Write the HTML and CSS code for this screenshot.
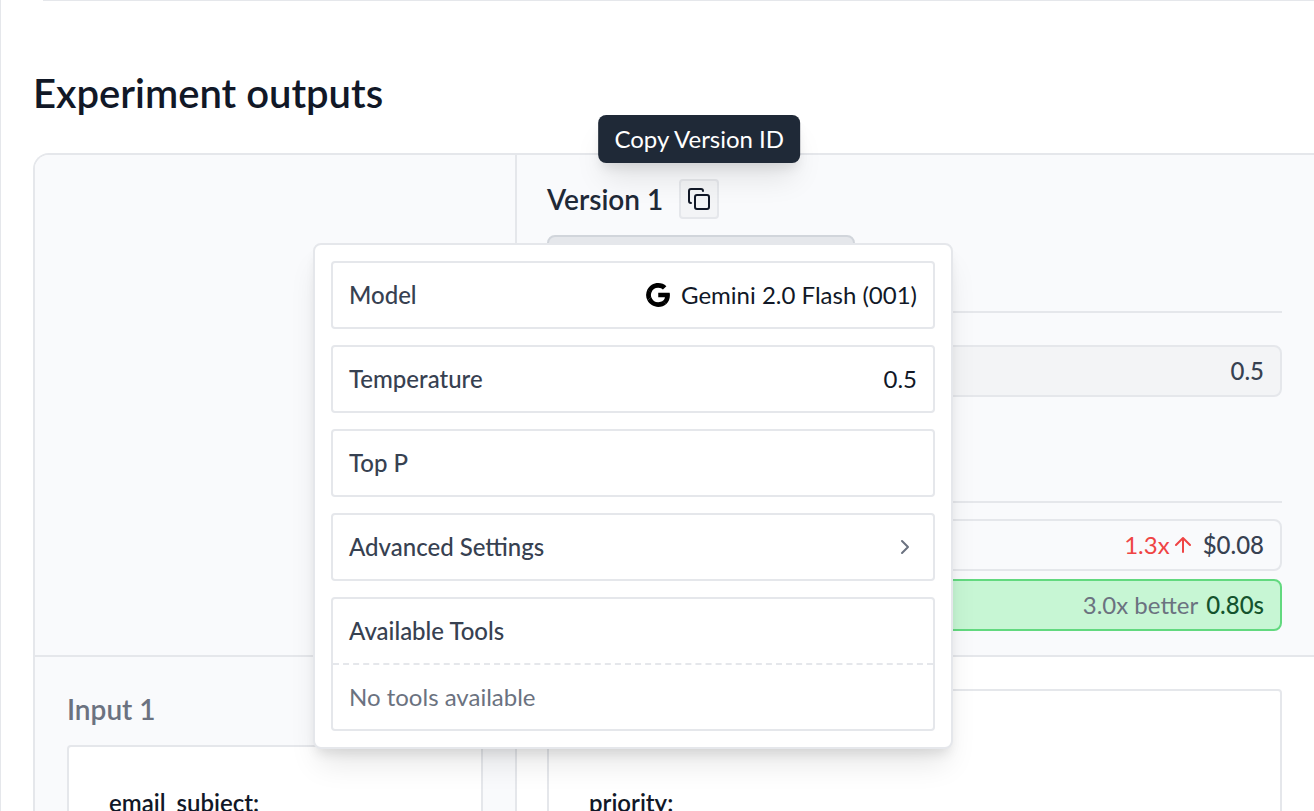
FILE: index.html
```html
<!DOCTYPE html>
<html lang="en">
<head>
<meta charset="utf-8">
<meta name="viewport" content="width=device-width, initial-scale=1">
<title>Experiment outputs</title>
<link rel="stylesheet" href="styles.css">
</head>
<body>
<main class="page">
  <div class="summary-card"></div>
  <h1 class="title">Experiment outputs</h1>
  <section class="outputs">
    <div class="cell cell-corner"></div>
    <div class="cell cell-version">
      <header class="version-head">
        <h2 class="version-name">Version 1</h2>
        <div class="copy">
          <button class="copy-button" type="button" aria-label="Copy Version ID">
            <svg class="icon" viewBox="0 0 24 24" fill="none" stroke="currentColor" stroke-width="2" stroke-linecap="round" stroke-linejoin="round"><rect x="8" y="8" width="14" height="14" rx="2"/><path d="M4 16c-1.100 0-2-.9-2-2V4c0-1.100.9-2 2-2h10c1.100 0 2 .9 2 2"/></svg>
          </button>
          <div class="tooltip" role="tooltip">Copy Version ID</div>
        </div>
      </header>
      <button class="model-button" type="button" aria-label="Model settings"></button>
      <div class="group group-params">
        <div class="metric metric-muted"><span>0.5</span></div>
      </div>
      <div class="group group-stats">
        <div class="metric">
          <span class="worse">1.3x<svg class="arrow" viewBox="0 0 16 18" fill="none" stroke="currentColor" stroke-width="2" stroke-linecap="round" stroke-linejoin="round"><path d="M8 16V2M1 9l7-7 7 7"/></svg></span>
          <span>$0.08</span>
        </div>
        <div class="metric metric-best"><span class="note">3.0x better</span><span>0.80s</span></div>
      </div>
    </div>
    <div class="cell cell-input">
      <h3 class="input-name">Input 1</h3>
      <div class="box">email_subject:</div>
    </div>
    <div class="cell cell-output">
      <div class="box box-output">priority:</div>
    </div>
  </section>

  <div class="popover" role="dialog" aria-label="Model settings">
    <div class="row">
      <span>Model</span>
      <span class="value">
        <svg class="google" viewBox="0 0 24 24" fill="currentColor"><path d="M23 12.245c0-.905-.075-1.565-.236-2.250h-10.540v4.083h6.186c-.124 1.014-.797 2.542-2.294 3.569l-.021.136 3.332 2.530.230.022C21.779 18.417 23 15.593 23 12.245z"/><path d="M12.225 23c3.030 0 5.574-.978 7.433-2.665l-3.542-2.688c-.948.648-2.220 1.100-3.891 1.100a6.745 6.745 0 01-6.386-4.572l-.132.011-3.465 2.628-.045.124C4.043 20.531 7.835 23 12.225 23z"/><path d="M5.840 14.175A6.650 6.650 0 015.463 12c0-.758.138-1.491.361-2.175l-.006-.147-3.508-2.670-.115.054A10.831 10.831 0 001 12c0 1.772.436 3.447 1.197 4.938l3.642-2.763z"/><path d="M12.225 5.253c2.108 0 3.529.892 4.340 1.638l3.167-3.031C17.787 2.088 15.255 1 12.225 1 7.834 1 4.043 3.469 2.197 7.062l3.630 2.763a6.770 6.770 0 016.398-4.572z"/></svg>
        Gemini 2.0 Flash (001)
      </span>
    </div>
    <div class="row"><span>Temperature</span><span class="value">0.5</span></div>
    <div class="row"><span>Top P</span></div>
    <button class="row" type="button">
      <span>Advanced Settings</span>
      <svg class="icon chevron" viewBox="0 0 24 24" fill="none" stroke="currentColor" stroke-width="2" stroke-linecap="round" stroke-linejoin="round"><path d="M9 18l6-6-6-6"/></svg>
    </button>
    <div class="tools">
      <div class="tools-head">Available Tools</div>
      <div class="tools-empty">No tools available</div>
    </div>
  </div>
</main>
</body>
</html>
```
FILE: styles.css
```css
*, *::before, *::after { box-sizing: border-box; }

body {
  margin: 0;
  background: #fff;
  color: #111827;
  font-family: Lato, "Liberation Sans", sans-serif;
  font-size: 24px;
  line-height: 32px;
}

h1, h2, h3 { margin: 0; font-weight: 600; }
button { font: inherit; color: inherit; margin: 0; }
svg { display: block; flex: none; }

.page {
  position: relative;
  display: flex;
  flex-direction: column;
  height: 100vh;
  overflow: hidden;
  border-left: 1px solid #e5e7eb;
  padding-left: 32px;
}

.summary-card {
  flex: none;
  height: 1px;
  margin-left: 10px;
  background: #e5e7eb;
}

.title {
  padding: 68px 0 36px;
  font-size: 40px;
  line-height: 48px;
}

.outputs {
  display: grid;
  grid-template-columns: 482px 1fr;
  border: 2px solid #e5e7eb;
  border-right: 0;
  border-bottom: 0;
  border-radius: 16px 0 0 0;
}

.cell { border-bottom: 2px solid #e5e7eb; }
.cell-corner, .cell-version, .cell-input { background: #f9fafc; }
.cell-corner { border-radius: 14px 0 0 0; }
.cell-corner, .cell-input { border-right: 2px solid #e5e7eb; }
.cell-version { padding: 24px 32px 24px 30px; }
.cell-input { padding: 32px; }
.cell-output { padding: 32px 32px 32px 30px; }

.version-head { display: flex; align-items: center; gap: 16px; }
.version-name { font-size: 28px; line-height: 40px; color: #1f2937; }

.copy { position: relative; }
.copy-button {
  display: grid;
  place-items: center;
  width: 40px;
  height: 40px;
  padding: 0;
  border: 2px solid #e5e7eb;
  border-radius: 4px;
  background: #f3f4f6;
}
.icon { width: 24px; height: 24px; }

.tooltip {
  position: absolute;
  bottom: 56px;
  left: 50%;
  transform: translateX(-50%);
  padding: 8px 16px;
  border-radius: 8px;
  background: #1f2937;
  color: #fff;
  white-space: nowrap;
  box-shadow: 0 20px 30px -6px rgb(0 0 0 / 10%), 0 8px 12px -4px rgb(0 0 0 / 10%);
}

.model-button {
  display: block;
  width: 308px;
  height: 52px;
  margin: 16px 0 24px;
  border: 2px solid #d1d5db;
  border-radius: 8px;
  background: #e5e7eb;
}

.group {
  display: flex;
  flex-direction: column;
  gap: 8px;
  border-top: 2px solid #e5e7eb;
}
.group-params { padding: 32px 0 104px; }
.group-stats { padding-top: 16px; }

.metric {
  display: flex;
  align-items: center;
  justify-content: flex-end;
  gap: 8px;
  padding: 8px 16px;
  border: 2px solid #e5e7eb;
  border-radius: 8px;
  color: #374151;
  font-weight: 500;
}
.metric-muted { background: #f3f4f6; }
.metric-best { border-color: #62d97f; background: #c7f6d4; color: #14532d; }
.note { color: #6b7280; font-weight: 400; }
.worse { display: flex; align-items: center; gap: 5px; margin-right: 4px; color: #ef4444; font-weight: 400; }
.arrow { width: 16px; height: 18px; }

.input-name {
  margin-bottom: 16px;
  font-size: 28px;
  line-height: 40px;
  color: #6b7280;
}
.box {
  height: 320px;
  padding: 40px;
  border: 2px solid #e5e7eb;
  border-radius: 4px;
  background: #fff;
  font-weight: 600;
}
.box-output { padding-top: 96px; }

.popover {
  position: absolute;
  top: 243px;
  left: 312px;
  display: flex;
  flex-direction: column;
  gap: 16px;
  width: 640px;
  padding: 16px;
  border: 2px solid #e5e7eb;
  border-radius: 8px;
  background: #fff;
  color: #374151;
  font-weight: 500;
  box-shadow: 0 20px 30px -6px rgb(0 0 0 / 10%), 0 8px 12px -4px rgb(0 0 0 / 10%);
}
.row {
  display: flex;
  align-items: center;
  justify-content: space-between;
  padding: 16px;
  border: 2px solid #e5e7eb;
  border-radius: 4px;
  background: #fff;
}
.value { display: flex; align-items: center; gap: 10px; color: #111827; font-weight: 400; }
.google { width: 26px; height: 26px; color: #000; }
.chevron { color: #6b7280; }

.tools { border: 2px solid #e5e7eb; border-radius: 4px; }
.tools-head { padding: 16px; border-bottom: 2px dashed #e5e7eb; }
.tools-empty { padding: 16px; color: #6b7280; font-weight: 400; }
```
